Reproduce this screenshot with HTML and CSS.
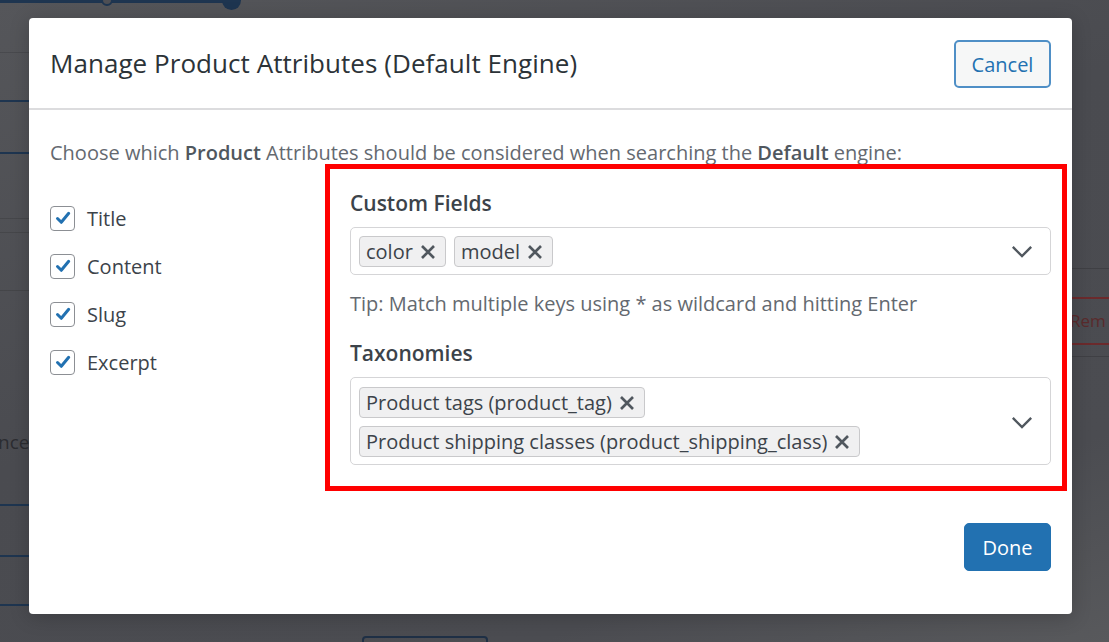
FILE: index.html
```html
<!DOCTYPE html>
<html lang="en">
<head>
  <meta charset="UTF-8" />
  <title>Manage Product Attributes</title>
  <meta name="viewport" content="width=device-width, initial-scale=1" />
  <link rel="stylesheet" href="styles.css">
</head>
<body>
  <!-- page behind the overlay -->
  <div class="backdrop">
    <div class="bg-timeline"></div>
    <div class="bg-dot bg-dot-open"></div>
    <div class="bg-dot bg-dot-full"></div>
    <div class="bg-line faint" style="top: 52px"></div>
    <div class="bg-line navy" style="top: 100px"></div>
    <div class="bg-line navy" style="top: 152px"></div>
    <div class="bg-line faint" style="top: 218px"></div>
    <div class="bg-line faint" style="top: 232px"></div>
    <div class="bg-line faint" style="top: 290px"></div>
    <div class="bg-text">nce</div>
    <div class="bg-line navy" style="top: 504px"></div>
    <div class="bg-line navy" style="top: 555px"></div>
    <div class="bg-line navy" style="top: 604px"></div>
    <div class="bg-right-line" style="top: 268px"></div>
    <div class="bg-right-line" style="top: 356px"></div>
    <div class="bg-remove">Rem</div>
    <div class="bg-button"></div>
  </div>

  <div class="modal">
    <div class="modal-header">
      <h1>Manage Product Attributes (Default Engine)</h1>
      <button class="btn btn-secondary">Cancel</button>
    </div>

    <div class="modal-body">
      <p class="intro">Choose which <strong>Product</strong> Attributes should be considered when searching the <strong>Default</strong> engine:</p>

      <div class="columns">
        <ul class="attr-list">
          <li><span class="check"><svg viewBox="0 0 20 20"><path d="M4.5 10.5l3.8 3.8 7.4-9" /></svg></span>Title</li>
          <li><span class="check"><svg viewBox="0 0 20 20"><path d="M4.5 10.5l3.8 3.8 7.4-9" /></svg></span>Content</li>
          <li><span class="check"><svg viewBox="0 0 20 20"><path d="M4.5 10.5l3.8 3.8 7.4-9" /></svg></span>Slug</li>
          <li><span class="check"><svg viewBox="0 0 20 20"><path d="M4.5 10.5l3.8 3.8 7.4-9" /></svg></span>Excerpt</li>
        </ul>

        <div class="fields">
          <div class="field">
            <h3>Custom Fields</h3>
            <div class="multiselect">
              <div class="tags">
                <span class="tag">color <svg class="x" viewBox="0 0 12 12"><path d="M1.5 1.5l9 9M10.5 1.5l-9 9" /></svg></span>
                <span class="tag">model <svg class="x" viewBox="0 0 12 12"><path d="M1.5 1.5l9 9M10.5 1.5l-9 9" /></svg></span>
              </div>
              <svg class="chevron" viewBox="0 0 24 14"><path d="M2 2l10 10 10-10" /></svg>
            </div>
            <p class="tip">Tip: Match multiple keys using * as wildcard and hitting Enter</p>
          </div>

          <div class="field">
            <h3>Taxonomies</h3>
            <div class="multiselect tall">
              <div class="tags stacked">
                <span class="tag">Product tags (product_tag) <svg class="x" viewBox="0 0 12 12"><path d="M1.5 1.5l9 9M10.5 1.5l-9 9" /></svg></span>
                <span class="tag">Product shipping classes (product_shipping_class) <svg class="x" viewBox="0 0 12 12"><path d="M1.5 1.5l9 9M10.5 1.5l-9 9" /></svg></span>
              </div>
              <svg class="chevron" viewBox="0 0 24 14"><path d="M2 2l10 10 10-10" /></svg>
            </div>
          </div>
        </div>
      </div>

      <div class="modal-footer">
        <button class="btn btn-primary">Done</button>
      </div>
    </div>
  </div>

  <div class="highlight"></div>
</body>
</html>
```

FILE: styles.css
```css
:root {
  --blue: #2271b1;
  --text: #3c434a;
  --muted: #646970;
  --border: #c3c4c7;
}

* {
  box-sizing: border-box;
  margin: 0;
  padding: 0;
}

body {
  font-family: 'Open Sans', 'Noto Sans', sans-serif;
  background: linear-gradient(160deg, #55565a 0%, #4a4b50 45%, #4b4c51 80%, #58595c 100%);
  width: 1109px;
  height: 642px;
  overflow: hidden;
  position: relative;
  color: var(--text);
}

/* ---- background page ---- */
.backdrop {
  position: absolute;
  inset: 0;
}

.bg-timeline {
  position: absolute;
  left: 0; top: 0;
  width: 232px; height: 3px;
  background: #1e3550;
}

.bg-dot {
  position: absolute;
  border-radius: 50%;
}

.bg-dot-open {
  left: 101px; top: -6px;
  width: 12px; height: 12px;
  border: 2px solid #1e3550;
  background: #4e4f54;
}

.bg-dot-full {
  left: 222px; top: -9px;
  width: 19px; height: 19px;
  background: #1e3550;
}

.bg-line {
  position: absolute;
  left: 0;
  width: 29px;
  height: 2px;
}

.bg-line.faint { background: rgba(0,0,0,0.12); height: 1px; }
.bg-line.navy { background: #1e3550; }

.bg-text {
  position: absolute;
  left: -2px; top: 429px;
  font-size: 19px;
  color: #2c2d31;
}

.bg-right-line {
  position: absolute;
  left: 1072px; width: 37px;
  height: 1px;
  background: rgba(0,0,0,0.15);
}

.bg-remove {
  position: absolute;
  left: 1068px; top: 297px;
  height: 48px;
  width: 41px;
  padding-left: 2px;
  border-top: 2px solid #6b2a2c;
  border-bottom: 2px solid #6b2a2c;
  color: #5a2a2c;
  font-size: 17px;
  line-height: 44px;
}

.bg-button {
  position: absolute;
  left: 362px; top: 636px;
  width: 126px; height: 20px;
  border: 2px solid #1e2f45;
  border-radius: 4px;
}

/* ---- modal ---- */
.modal {
  position: relative;
  margin: 18px 0 0 29px;
  width: 1043px;
  height: 596px;
  background: #fff;
  border-radius: 4px;
  box-shadow: 0 3px 20px rgba(0,0,0,0.2);
}

.modal-header {
  height: 92px;
  display: flex;
  align-items: center;
  justify-content: space-between;
  padding: 0 21px;
  border-bottom: 2px solid #dcdcde;
}

.modal-header h1 {
  font-size: 26px;
  font-weight: 400;
  color: #2c3338;
  letter-spacing: 0.05px;
}

.btn {
  font-family: inherit;
  border-radius: 5px;
  cursor: pointer;
  height: 48px;
  font-size: 20px;
}

.btn-secondary {
  width: 97px;
  background: #f6f7f7;
  color: var(--blue);
  border: 2px solid #4f8fc6;
  margin-top: 2px;
}

.btn-primary {
  width: 87px;
  background: var(--blue);
  color: #fff;
  border: 1px solid var(--blue);
}

.modal-body {
  padding: 30px 21px 0;
}

.intro {
  font-size: 20px;
  color: var(--muted);
  line-height: 26px;
}

.intro strong {
  color: #50575e;
  font-weight: 600;
}

.columns {
  display: flex;
  margin-top: 24px;
}

.attr-list {
  list-style: none;
  width: 300px;
  padding-top: 4px;
}

.attr-list li {
  display: flex;
  align-items: center;
  height: 48px;
  font-size: 20px;
  color: var(--text);
}

.check {
  width: 25px; height: 25px;
  border: 1.5px solid #8c8f94;
  border-radius: 4px;
  margin-right: 12px;
  display: flex;
  align-items: center;
  justify-content: center;
}

.check svg {
  width: 20px; height: 20px;
  fill: none;
  stroke: var(--blue);
  stroke-width: 3;
  stroke-linecap: round;
  stroke-linejoin: round;
}

.fields {
  width: 701px;
}

.field h3 {
  font-size: 21px;
  font-weight: 600;
  color: var(--text);
  line-height: 26px;
  margin-bottom: 11px;
}

.multiselect {
  display: flex;
  align-items: center;
  justify-content: space-between;
  border: 1px solid #d5d5d7;
  border-radius: 5px;
  padding: 8px 17px 7px 8px;
  min-height: 47px;
}

.multiselect.tall {
  padding-top: 9px;
}

.tags {
  display: flex;
  gap: 8px;
}

.tags.stacked {
  flex-direction: column;
  align-items: flex-start;
}

.tag {
  display: inline-flex;
  align-items: center;
  height: 31px;
  padding: 0 9px 0 6px;
  background: #f0f0f1;
  border: 1.5px solid #c9c9cb;
  border-radius: 4px;
  font-size: 20px;
  color: var(--text);
  white-space: nowrap;
}

.x {
  width: 16px; height: 16px;
  margin-left: 7px;
  fill: none;
  stroke: #50575e;
  stroke-width: 2;
}

.chevron {
  width: 22px; height: 13px;
  fill: none;
  stroke: #50575e;
  stroke-width: 2.6;
}

.tip {
  font-size: 20px;
  color: var(--muted);
  line-height: 26px;
  margin: 16px 0 23px;
}

.modal-footer {
  display: flex;
  justify-content: flex-end;
  margin-top: 58px;
}

/* annotation frame */
.highlight {
  position: absolute;
  left: 325px; top: 164px;
  width: 742px; height: 327px;
  border: 5px solid #ff0000;
}
```
